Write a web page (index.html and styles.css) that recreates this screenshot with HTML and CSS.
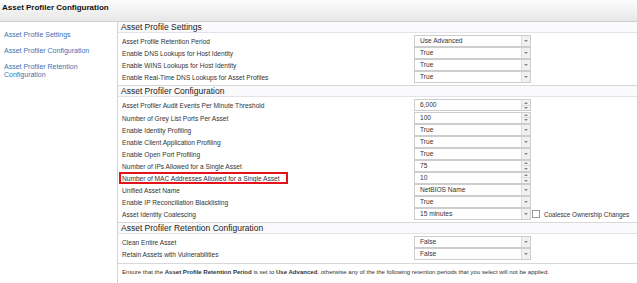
FILE: index.html
```html
<!DOCTYPE html>
<html lang="en">
<head>
    <meta charset="UTF-8">
    <meta name="viewport" content="width=device-width, initial-scale=1.0">
    <title>Asset Profiler Configuration</title>
    <link rel="stylesheet" href="styles.css">
</head>
<body>
    <div class="page-header">
        <h1>Asset Profiler Configuration</h1>
    </div>
    <div class="layout">
        <nav class="side-nav">
            <a href="#settings">Asset Profile Settings</a>
            <a href="#config">Asset Profiler Configuration</a>
            <a href="#retention">Asset Profiler Retention Configuration</a>
        </nav>
        <div class="main">
            <section class="group" id="settings">
                <h2 class="group-title">Asset Profile Settings</h2>
                <div class="rows">
                    <div class="row"><span class="label">Asset Profile Retention Period</span><div class="control select"><span class="value">Use Advanced</span><span class="arrow"></span></div></div>
                    <div class="row"><span class="label">Enable DNS Lookups for Host Identity</span><div class="control select"><span class="value">True</span><span class="arrow"></span></div></div>
                    <div class="row"><span class="label">Enable WINS Lookups for Host Identity</span><div class="control select"><span class="value">True</span><span class="arrow"></span></div></div>
                    <div class="row"><span class="label">Enable Real-Time DNS Lookups for Asset Profiles</span><div class="control select"><span class="value">True</span><span class="arrow"></span></div></div>
                </div>
            </section>
            <section class="group" id="config">
                <h2 class="group-title">Asset Profiler Configuration</h2>
                <div class="rows">
                    <div class="row"><span class="label">Asset Profiler Audit Events Per Minute Threshold</span><div class="control spin"><span class="value">6,000</span><span class="spinner"><i class="up"></i><i class="down"></i></span></div></div>
                    <div class="row"><span class="label">Number of Grey List Ports Per Asset</span><div class="control spin"><span class="value">100</span><span class="spinner"><i class="up"></i><i class="down"></i></span></div></div>
                    <div class="row"><span class="label">Enable Identity Profiling</span><div class="control select"><span class="value">True</span><span class="arrow"></span></div></div>
                    <div class="row"><span class="label">Enable Client Application Profiling</span><div class="control select"><span class="value">True</span><span class="arrow"></span></div></div>
                    <div class="row"><span class="label">Enable Open Port Profiling</span><div class="control select"><span class="value">True</span><span class="arrow"></span></div></div>
                    <div class="row"><span class="label">Number of IPs Allowed for a Single Asset</span><div class="control spin"><span class="value">75</span><span class="spinner"><i class="up"></i><i class="down"></i></span></div></div>
                    <div class="row"><span class="label highlight">Number of MAC Addresses Allowed for a Single Asset</span><div class="control spin"><span class="value">10</span><span class="spinner"><i class="up"></i><i class="down"></i></span></div></div>
                    <div class="row"><span class="label">Unified Asset Name</span><div class="control select"><span class="value">NetBIOS Name</span><span class="arrow"></span></div></div>
                    <div class="row"><span class="label">Enable IP Reconciliation Blacklisting</span><div class="control select"><span class="value">True</span><span class="arrow"></span></div></div>
                    <div class="row"><span class="label">Asset Identity Coalescing</span><div class="control select"><span class="value">15 minutes</span><span class="arrow"></span></div><label class="check"><span class="box"></span>Coalesce Ownership Changes</label></div>
                </div>
            </section>
            <section class="group" id="retention">
                <h2 class="group-title">Asset Profiler Retention Configuration</h2>
                <div class="rows">
                    <div class="row"><span class="label">Clean Entire Asset</span><div class="control select"><span class="value">False</span><span class="arrow"></span></div></div>
                    <div class="row"><span class="label">Retain Assets with Vulnerabilities</span><div class="control select"><span class="value">False</span><span class="arrow"></span></div></div>
                </div>
            </section>
            <p class="note">Ensure that the <b>Asset Profile Retention Period</b> is set to <b>Use Advanced</b>, otherwise any of the the following retention periods that you select will not be applied.</p>
        </div>
    </div>
</body>
</html>
```

FILE: styles.css
```css
body {
    margin: 0;
    background-color: #fff;
    color: #333;
    font-family: "Liberation Sans", Arial, sans-serif;
}
.page-header {
    height: 21px;
    border-bottom: 1px solid #cfcfcf;
    background: linear-gradient(#fdfdfd, #e7e7e7);
}
.page-header h1 {
    margin: 0;
    padding: 3px 0 0 2px;
    font-size: 8px;
    line-height: 10px;
    color: #111;
}
.layout {
    display: flex;
    min-height: 261px;
}
.side-nav {
    width: 118px;
    flex-shrink: 0;
    border-right: 1px solid #d4d4d4;
    padding: 9px 0 0 4px;
    box-sizing: border-box;
    display: flex;
    flex-direction: column;
    gap: 8.5px;
}
.side-nav a {
    color: #3a72b8;
    text-decoration: none;
    font-size: 7px;
    line-height: 7.7px;
    padding-right: 20px;
}
.main {
    flex: 1;
}
.group {
    border-bottom: 1px solid #d8d8d8;
}
.group-title {
    margin: 0;
    height: 10px;
    line-height: 10px;
    padding-left: 3px;
    font-size: 8.5px;
    font-weight: normal;
    color: #222;
    background-color: #fafafc;
    border-bottom: 1px solid #e4e4e8;
}
.rows {
    padding: 2px 0 2px 4px;
}
.row {
    display: grid;
    grid-template-columns: 292px 117px auto;
    align-items: center;
    height: 12.1px;
    font-size: 6.6px;
}
.label {
    justify-self: start;
    padding-top: 1px;
    color: #333;
}
.highlight {
    outline: 2px solid #e3121b;
    outline-offset: 0;
    padding-left: 1px;
    padding-right: 6px;
    margin-left: -1px;
}
.control {
    display: flex;
    height: 12px;
    box-sizing: border-box;
    border: 1px solid #cdcdcd;
    background-color: #fff;
}
.control .value {
    flex: 1;
    padding-left: 5px;
    line-height: 10px;
    color: #333;
}
.arrow {
    width: 8px;
    background-color: #f1f1f1;
    border-left: 1px solid #dcdcdc;
    display: flex;
    align-items: center;
    justify-content: center;
}
.arrow::after {
    content: "";
    border-top: 2px solid #888;
    border-left: 2px solid transparent;
    border-right: 2px solid transparent;
}
.spinner {
    width: 8px;
    background-color: #f1f1f1;
    border-left: 1px solid #dcdcdc;
    display: flex;
    flex-direction: column;
}
.spinner i {
    flex: 1;
    display: flex;
    align-items: center;
    justify-content: center;
}
.spinner .up {
    border-bottom: 1px solid #dcdcdc;
}
.spinner .up::after {
    content: "";
    border-bottom: 2px solid #888;
    border-left: 2px solid transparent;
    border-right: 2px solid transparent;
}
.spinner .down::after {
    content: "";
    border-top: 2px solid #888;
    border-left: 2px solid transparent;
    border-right: 2px solid transparent;
}
.check {
    display: flex;
    align-items: center;
    gap: 4px;
    padding-left: 1px;
    font-size: 6.3px;
    color: #333;
    white-space: nowrap;
}
.check .box {
    width: 6px;
    height: 6px;
    border: 1px solid #999;
    background-color: #fff;
}
.note {
    margin: 0;
    padding: 4px 4px;
    font-size: 6.05px;
    line-height: 8px;
    color: #333;
}
```
